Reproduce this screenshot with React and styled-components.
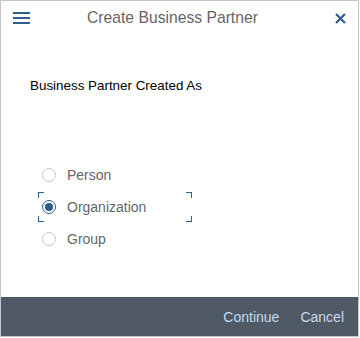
import React, { useState } from 'react'
import styled, { createGlobalStyle } from 'styled-components'

const GlobalStyle = createGlobalStyle`
  html, body {
    margin: 0;
    padding: 0;
    background: #fff;
    font-family: Arial, "Liberation Sans", Helvetica, sans-serif;
  }
`

const options = ['Person', 'Organization', 'Group']

function App() {
  const [value, setValue] = useState('Organization')

  return (
    <>
      <GlobalStyle />
      <Dialog>
        <Header>
          <IconButton aria-label="Menu">
            <svg width="17" height="12" viewBox="0 0 17 12">
              <rect x="0" y="0" width="17" height="2" fill="#2c5f8d" />
              <rect x="0" y="5" width="17" height="2" fill="#2c5f8d" />
              <rect x="0" y="10" width="17" height="2" fill="#2c5f8d" />
            </svg>
          </IconButton>
          <Title>Create Business Partner</Title>
          <CloseButton aria-label="Close">
            <svg width="11" height="11" viewBox="0 0 11 11">
              <path d="M1 1 L10 10 M10 1 L1 10" stroke="#2c5f8d" strokeWidth="2.2" />
            </svg>
          </CloseButton>
        </Header>

        <Content>
          <Label>Business Partner Created As</Label>
          <RadioGroup>
            {options.map((opt) => (
              <RadioRow key={opt} onClick={() => setValue(opt)}>
                <Circle $checked={opt === value} />
                <RadioText>{opt}</RadioText>
                {opt === value && (
                  <>
                    <Corner $pos="tl" />
                    <Corner $pos="tr" />
                    <Corner $pos="bl" />
                    <Corner $pos="br" />
                  </>
                )}
              </RadioRow>
            ))}
          </RadioGroup>
        </Content>

        <Footer>
          <FooterButton>Continue</FooterButton>
          <FooterButton>Cancel</FooterButton>
        </Footer>
      </Dialog>
    </>
  )
}

const Dialog = styled.div`
  width: 359px;
  height: 337px;
  box-sizing: border-box;
  border: 1px solid #c2c6ca;
  display: flex;
  flex-direction: column;
  background: #fff;
`

const Header = styled.div`
  height: 34px;
  display: flex;
  align-items: center;
  padding: 0 9px 0 12px;
  flex-shrink: 0;
`

const IconButton = styled.div`
  width: 17px;
  height: 17px;
  display: flex;
  align-items: center;
  justify-content: center;
`

const CloseButton = styled(IconButton)`
  margin-left: auto;
`

const Title = styled.div`
  font-size: 15.7px;
  color: #666;
  margin-left: 57px;
`

const Content = styled.div`
  flex: 1;
  padding: 43px 0 0 29px;
`

const Label = styled.div`
  font-size: 13.4px;
  color: #000;
  line-height: 16px;
`

const RadioGroup = styled.div`
  margin-top: 65px;
  margin-left: 8px;
  display: flex;
  flex-direction: column;
`

const RadioRow = styled.div`
  position: relative;
  width: 154px;
  height: 32px;
  display: flex;
  align-items: center;
  padding-left: 4px;
  box-sizing: border-box;
  cursor: pointer;
`

const Circle = styled.span`
  width: 14px;
  height: 14px;
  box-sizing: border-box;
  border-radius: 50%;
  border: 1px solid ${({ $checked }) => ($checked ? '#2c5f8d' : '#c9c9c9')};
  display: flex;
  align-items: center;
  justify-content: center;
  background: #fff;

  &::after {
    content: '';
    width: 8px;
    height: 8px;
    border-radius: 50%;
    background: ${({ $checked }) => ($checked ? '#2c5f8d' : 'transparent')};
  }
`

const RadioText = styled.span`
  margin-left: 11px;
  font-size: 14px;
  color: #666;
`

const Corner = styled.span`
  position: absolute;
  width: 5px;
  height: 5px;
  border-color: #2c5f8d;
  border-style: solid;
  border-width: 0;
  ${({ $pos }) => ($pos[0] === 't' ? 'top: 1px; border-top-width: 1px;' : 'bottom: 1px; border-bottom-width: 1px;')}
  ${({ $pos }) => ($pos[1] === 'l' ? 'left: 0; border-left-width: 1px;' : 'right: 0; border-right-width: 1px;')}
`

const Footer = styled.div`
  height: 39px;
  background: #4f5a66;
  display: flex;
  align-items: center;
  justify-content: flex-end;
  gap: 21px;
  padding-right: 14px;
  flex-shrink: 0;
`

const FooterButton = styled.span`
  font-size: 14px;
  color: #c4dbef;
  cursor: pointer;
`

export default App
